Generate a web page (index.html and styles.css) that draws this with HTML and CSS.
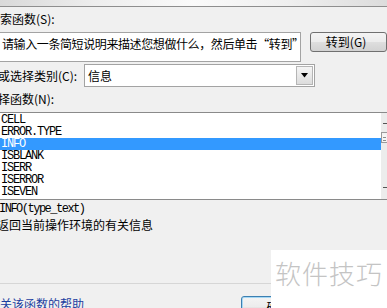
FILE: index.html
```html
<!DOCTYPE html>
<html lang="zh-CN">
<head>
<meta charset="utf-8">
<link rel="stylesheet" href="styles.css">
</head>
<body>
<div class="dlg">
  <div class="topbar"></div>
  <div class="lbl l1">索函数(<u>S</u>):</div>
  <div class="row r1">
    <div class="input">请输入一条简短说明来描述您想做什么，然后单击“转到”</div>
    <div class="btn go">转到(<u>G</u>)</div>
  </div>
  <div class="row r2">
    <span class="lbl cat">或选择类别(<u>C</u>):</span>
    <div class="select">
      <span class="val">信息</span>
      <span class="arrow"><svg width="9" height="5" viewBox="0 0 9 5"><path d="M1 0 H8 L4.5 4.5 Z" fill="#000"/></svg></span>
    </div>
  </div>
  <div class="lbl l3">择函数(<u>N</u>):</div>
  <div class="list">
    <div class="items">
      <div class="item">CELL</div>
      <div class="item">ERROR.TYPE</div>
      <div class="item sel">INFO</div>
      <div class="item">ISBLANK</div>
      <div class="item">ISERR</div>
      <div class="item">ISERROR</div>
      <div class="item">ISEVEN</div>
    </div>
    <div class="scroll">
      <span class="tick up"></span>
      <span class="thumb"></span>
      <span class="tick down"></span>
    </div>
  </div>
  <div class="sig">INFO(type_text)</div>
  <div class="desc">返回当前操作环境的有关信息</div>
  <div class="sep"></div>
  <div class="bottom">
    <a class="help">关该函数的帮助</a>
    <div class="btn ok">确定</div>
  </div>
  <div class="watermark">软件技巧</div>
</div>
</body>
</html>
```
FILE: styles.css
```css
html, body {
  margin: 0;
  padding: 0;
}
body {
  width: 387px;
  height: 308px;
  overflow: hidden;
  background: #f0f0f0;
  font-family: "Noto Sans CJK SC", "Liberation Sans", sans-serif;
  font-size: 12px;
  color: #000;
}
.dlg {
  position: relative;
  width: 387px;
  height: 308px;
  overflow: hidden;
}
.topbar {
  height: 6px;
  background: linear-gradient(90deg, #d9d9d9 0%, #eeeeee 25%, #fafafa 50%, #efefef 75%, #dcdcdc 100%);
  border-bottom: 1px solid #8e8e8e;
}
.lbl {
  line-height: 14px;
  white-space: nowrap;
}
.lbl u {
  text-decoration: none;
}
.l1 {
  margin-top: 5px;
}
.row {
  display: flex;
}
.r1 {
  margin-top: 6px;
  margin-left: -10px;
  align-items: flex-start;
}
.input {
  box-sizing: border-box;
  width: 325px;
  height: 30px;
  border: 1px solid #a3a3a3;
  background: #fff;
  padding: 3px 0 0 11px;
  line-height: 15px;
  letter-spacing: -0.4px;
  white-space: nowrap;
  overflow: hidden;
}
.btn {
  box-sizing: border-box;
  border: 1px solid #707070;
  border-radius: 3px;
  background: linear-gradient(#f4f4f4 0%, #ececec 48%, #dedede 52%, #d2d2d2 100%);
  white-space: nowrap;
}
.go {
  margin-left: 9px;
  width: 80px;
  height: 20px;
  line-height: 18px;
  padding-left: 15px;
}
.go u {
  text-decoration: none;
}
.r2 {
  margin-top: 2px;
  align-items: center;
  height: 23px;
}
.cat {
  margin-left: -2px;
  width: 86px;
}
.select {
  box-sizing: border-box;
  width: 231px;
  height: 23px;
  border: 1px solid #a3a3a3;
  background: #fff;
  display: flex;
  align-items: center;
  justify-content: space-between;
  padding-left: 3px;
  padding-right: 1px;
}
.val {
  line-height: 14px;
}
.arrow {
  box-sizing: border-box;
  width: 17px;
  height: 19px;
  border: 1px solid #b5b5b5;
  background: linear-gradient(#f5f5f5, #dcdcdc);
  display: flex;
  align-items: center;
  justify-content: center;
}
.l3 {
  margin-top: 5px;
  margin-left: -2px;
}
.list {
  box-sizing: border-box;
  margin-top: 6px;
  height: 88px;
  border-top: 1px solid #8a8a8a;
  border-bottom: 1px solid #8a8a8a;
  background: #fff;
  display: flex;
}
.items {
  flex: 1;
  padding-top: 1px;
}
.item {
  height: 12px;
  line-height: 12px;
  font-family: "Liberation Mono", monospace;
  font-size: 12px;
  letter-spacing: -1.2px;
  padding-left: 1px;
  white-space: nowrap;
}
.item.sel {
  background: #3399ff;
  color: #fff;
}
.scroll {
  width: 6px;
  background: #ececec;
  position: relative;
}
.tick {
  position: absolute;
  left: 2px;
  width: 4px;
  height: 1px;
  background: #555;
}
.tick.up {
  top: 10px;
}
.tick.down {
  top: 74px;
}
.thumb {
  position: absolute;
  left: 0;
  top: 19px;
  width: 6px;
  height: 11px;
  box-sizing: border-box;
  border: 1px solid #9a9a9a;
  border-right: 0;
  background: repeating-linear-gradient(#f6f6f6 0 2px, #8c8c8c 2px 3px);
  background-size: 3px 100%;
  background-position: 1px 2px;
  background-repeat: no-repeat;
  background-color: #f3f3f3;
}
.sig {
  margin-top: 3px;
  margin-left: -1px;
  line-height: 12px;
  font-family: "Liberation Mono", monospace;
  font-size: 12px;
  letter-spacing: -1.5px;
  white-space: nowrap;
}
.desc {
  margin-top: 3px;
  margin-left: -3px;
  line-height: 14px;
  white-space: nowrap;
}
.sep {
  margin-top: 51px;
  height: 0;
  border-top: 1px solid #d6d6d6;
}
.bottom {
  display: flex;
  margin-top: 12px;
  align-items: flex-start;
}
.help {
  width: 241px;
  line-height: 14px;
  color: #1c3ea0;
  white-space: nowrap;
  margin-top: 1px;
}
.ok {
  width: 75px;
  height: 23px;
  line-height: 20px;
  text-align: center;
  border-color: #3c7fb1;
  box-shadow: inset 0 0 0 1px #a6d8f4;
}
.watermark {
  position: absolute;
  left: 271px;
  top: 250px;
  width: 116px;
  height: 58px;
  box-sizing: border-box;
  background: #fff;
  color: #c4c4c4;
  font-size: 26px;
  font-weight: 300;
  line-height: 36px;
  padding: 5px 0 0 4px;
  letter-spacing: 1px;
  white-space: nowrap;
}
```
